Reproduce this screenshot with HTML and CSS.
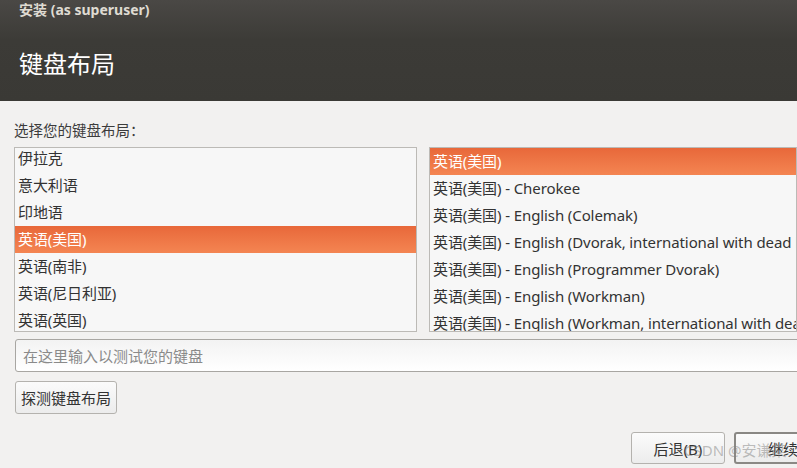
FILE: index.html
```html
<!DOCTYPE html>
<html lang="zh-CN">

<head>
    <meta charset="UTF-8">
    <meta name="viewport" content="width=device-width, initial-scale=1.0">
    <title>键盘布局</title>
    <link rel="stylesheet" href="styles.css">
</head>

<body>
    <div class="header">
        <div class="window-title">安装 (as superuser)</div>
        <h1>键盘布局</h1>
    </div>

    <div class="content">
        <p class="label">选择您的键盘布局：</p>

        <div class="lists">
            <div class="list list-left">
                <div class="rows shifted">
                    <div class="row">伊拉克</div>
                    <div class="row">意大利语</div>
                    <div class="row">印地语</div>
                    <div class="row selected">英语(美国)</div>
                    <div class="row">英语(南非)</div>
                    <div class="row">英语(尼日利亚)</div>
                    <div class="row">英语(英国)</div>
                </div>
            </div>
            <div class="list list-right">
                <div class="rows">
                    <div class="row selected">英语(美国)</div>
                    <div class="row">英语(美国) - Cherokee</div>
                    <div class="row">英语(美国) - English (Colemak)</div>
                    <div class="row">英语(美国) - English (Dvorak, international with dead keys)</div>
                    <div class="row">英语(美国) - English (Programmer Dvorak)</div>
                    <div class="row">英语(美国) - English (Workman)</div>
                    <div class="row">英语(美国) - English (Workman, international with dead keys)</div>
                </div>
            </div>
        </div>

        <input class="test-input" type="text" placeholder="在这里输入以测试您的键盘">

        <button class="btn detect-btn">探测键盘布局</button>

        <div class="actions">
            <button class="btn back-btn">后退(B)</button>
            <button class="btn next-btn">继续</button>
        </div>
    </div>

    <div class="watermark">CSDN @安谦某</div>
</body>

</html>
```

FILE: styles.css
```css
html,
body {
    margin: 0;
    height: 100%;
    overflow: hidden;
}

body {
    font-family: "Noto Sans", "Noto Sans CJK SC", sans-serif;
    background-color: #f2f1f0;
    color: #3c3c3c;
    position: relative;
}

.header {
    height: 101px;
    background: linear-gradient(#4a4845, #3c3b37 40%, #3a3935);
    padding: 0 19px;
    box-sizing: border-box;
}

.window-title {
    font-size: 14px;
    font-weight: bold;
    color: #dfdbd2;
    line-height: 20px;
}

.header h1 {
    margin: 0;
    padding-top: 25px;
    font-size: 24px;
    font-weight: normal;
    color: #ffffff;
    line-height: 38px;
}

.content {
    padding: 0 0 0 14px;
}

.label {
    margin: 0;
    padding-top: 19px;
    font-size: 14.5px;
    line-height: 20px;
    height: 27px;
}

.lists {
    display: flex;
    gap: 12px;
    width: 783px;
}

.list {
    height: 183px;
    border: 1px solid #bcbab6;
    background: #f7f7f7;
    overflow: hidden;
}

.list-left {
    width: 401px;
}

.list-right {
    flex: 1;
}

.rows.shifted {
    margin-top: -3px;
}

.row {
    height: 27px;
    line-height: 27px;
    padding-left: 3px;
    font-size: 15px;
    letter-spacing: -0.1px;
    white-space: nowrap;
    color: #333;
}

.row.selected {
    background: linear-gradient(#e8683a, #f48552);
    color: #ffffff;
}

.test-input {
    display: block;
    margin-top: 7px;
    margin-left: 1px;
    width: 800px;
    height: 33px;
    box-sizing: border-box;
    border: 1px solid #a8a6a2;
    border-radius: 3px;
    background: linear-gradient(#f3f3f3, #ffffff);
    padding: 0 7px;
    font-family: inherit;
    font-size: 15px;
    outline: none;
}

.test-input::placeholder {
    color: #8a8a8a;
}

.btn {
    font-family: inherit;
    font-size: 15px;
    color: #333;
    height: 33px;
    border: 1px solid #b4b2ae;
    border-radius: 3px;
    background: linear-gradient(#fbfbfb, #ececec);
    padding: 0 4px;
    cursor: pointer;
}

.detect-btn {
    display: block;
    margin-top: 9px;
    margin-left: 1px;
    width: 102px;
}

.actions {
    display: flex;
    gap: 9px;
    margin-top: 18px;
    margin-left: 617px;
}

.back-btn {
    flex-shrink: 0;
    width: 94px;
    height: 32px;
}

.next-btn {
    flex-shrink: 0;
    width: 94px;
    height: 32px;
    border: 2px solid #8a8884;
    text-align: left;
    padding-left: 32px;
}

.watermark {
    position: absolute;
    left: 684px;
    top: 439px;
    font-size: 15px;
    color: rgba(130, 130, 130, 0.5);
    white-space: nowrap;
}
```
